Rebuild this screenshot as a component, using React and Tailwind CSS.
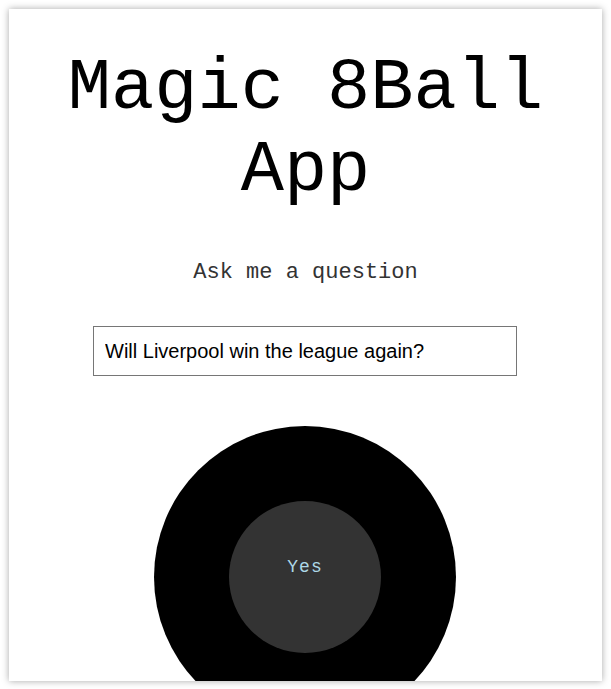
export default function App() {
  return (
    <div className="w-[611px] h-[689px] bg-white pt-[9px] pl-[9px] overflow-hidden">
      <div className="w-[593px] h-[672px] bg-white shadow-[0_0_7px_rgba(0,0,0,0.35)] overflow-hidden flex flex-col items-center">
        <h1 className="shrink-0 font-['Liberation_Mono',monospace] text-[72px] leading-[82px] text-black text-center mt-[39px]">
          Magic 8Ball App
        </h1>
        <p className="shrink-0 font-['Liberation_Mono',monospace] text-[22px] text-[#333] mt-[44px]">Ask me a question</p>
        <input
          className="shrink-0 mt-[37px] -ml-[1px] w-[424px] h-[50px] border border-[#767676] px-[11px] font-['Liberation_Sans',Arial,sans-serif] text-[20px] text-black outline-none"
          defaultValue="Will Liverpool win the league again?"
        />
        <div className="shrink-0 mt-[50px] -ml-[1px] w-[302px] h-[302px] rounded-full bg-black flex items-center justify-center">
          <div className="w-[152px] h-[152px] rounded-full bg-[#333] flex items-center justify-center">
            <span className="font-['Liberation_Mono',monospace] text-[18px] tracking-[1px] text-[#add8e6] -mt-[20px]">Yes</span>
          </div>
        </div>
      </div>
    </div>
  );
}
